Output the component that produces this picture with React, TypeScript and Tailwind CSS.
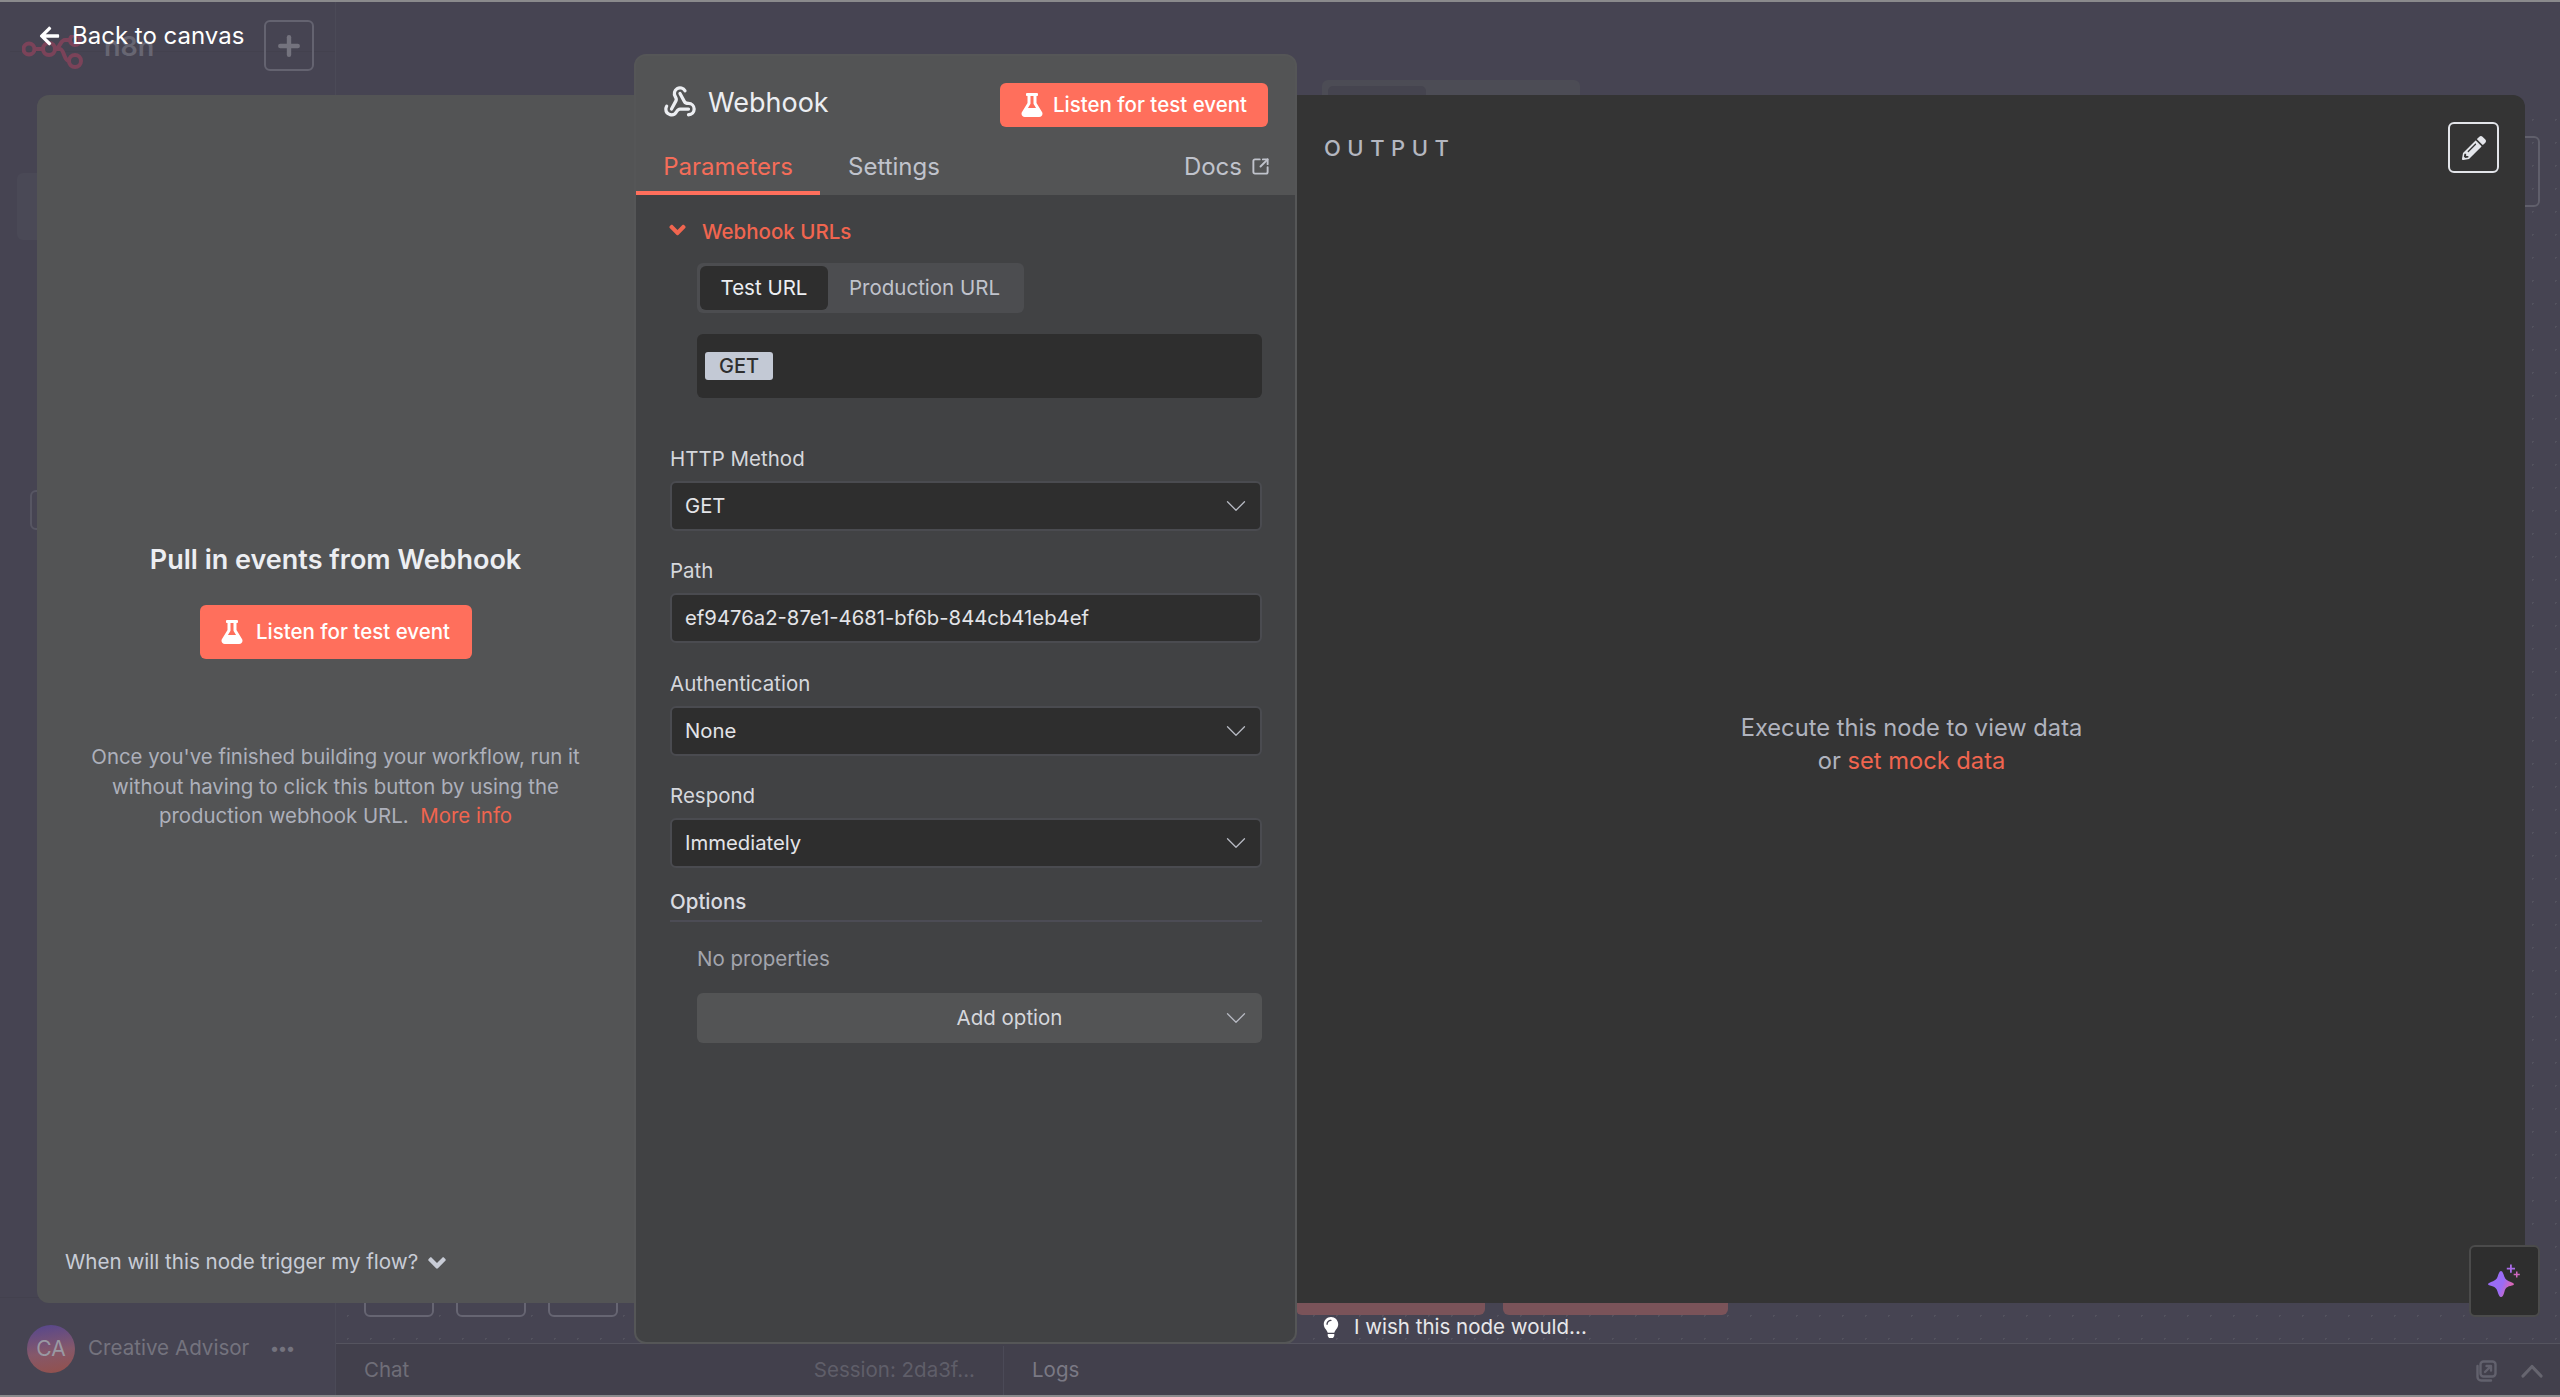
import { ChevronDown, Plus, SquareArrowOutUpRight, Webhook } from 'lucide-react';
import { FaAngleDown, FaArrowLeft, FaFlask, FaLightbulb, FaPencilAlt } from 'react-icons/fa';

function ListenButton({ className }: { className: string }) {
  return (
    <button className={`flex items-center justify-center rounded-[6px] bg-[#ff6f5c] font-medium text-white ${className}`}>
      <FaFlask className="h-[24px] w-[22px]" />
      <span className="text-[20.5px] leading-none">Listen for test event</span>
    </button>
  );
}

function Field({ label, value, select = true }: { label: string; value: string; select?: boolean }) {
  return (
    <div className="flex flex-col">
      <label className="flex h-[50px] items-end pb-[12px] text-[20.5px] leading-none text-[#d5d7dc]">{label}</label>
      <div className="flex h-[50px] items-center justify-between rounded-[6px] border-2 border-[#4a4b50] bg-[#2e2e2e] px-[13px] text-[20.3px] text-[#e3e4e8]">
        <span>{value}</span>
        {select && <ChevronDown className="-mr-[6px] h-[34px] w-[34px] text-[#b7bac3]" strokeWidth={0.9} />}
      </div>
    </div>
  );
}

function N8nLogo() {
  return (
    <svg width="62" height="34" viewBox="0 0 62 34" fill="none" stroke="#7b4359" strokeWidth="4">
      <circle cx="7" cy="14" r="5.5" />
      <circle cx="27" cy="14" r="6" />
      <circle cx="53" cy="26" r="6" />
      <circle cx="53" cy="5" r="5" />
      <path d="M12 14h9M33 14h5c4 0 4 12 9 12M33 14c5 0 5-9 10-9h5" />
    </svg>
  );
}

function Sparkle() {
  return (
    <svg width="34" height="34" viewBox="0 0 34 34">
      <defs>
        <linearGradient id="spark" x1="0" x2="1" y1="0.3" y2="0.7">
          <stop offset="0.55" stopColor="#9a6cf5" />
          <stop offset="0.85" stopColor="#d866b8" />
        </linearGradient>
      </defs>
      <path d="M13 7C14.500 7 15.500 10 16.500 13C17.500 15.500 19 16.500 24 18.500C26.500 19.500 26.500 21 24 21.500C19 22.500 17.500 24 16.500 27.500C15.500 31.500 14.500 33 13 33C11.500 33 10.500 31 9.500 27.500C8.500 24 7 22.800 2 21.500C-0.500 21 -0.500 19.500 2 18.500C7 16.500 8.500 15.500 9.500 13C10.500 10 11.500 7 13 7Z" fill="url(#spark)" />
      <path d="M22 0.500h1.800v3.200h3.200v1.800h-3.200v3.200h-1.800v-3.200h-3.200v-1.800h3.200Z" fill="#a96be8" />
      <path d="M28 7.500h1.500v2.300h2.300v1.500h-2.300v2.300h-1.500v-2.300h-2.300v-1.500h2.300Z" fill="#cf68c0" />
    </svg>
  );
}

function PopOut() {
  return (
    <svg width="21" height="22" viewBox="0 0 21 22" fill="none" stroke="#62616d" strokeWidth="2.4" strokeLinecap="round" strokeLinejoin="round">
      <rect x="4.500" y="1.500" width="15" height="15" rx="3" />
      <path d="M1.500 6v11a3.500 3.500 0 0 0 3.500 3.500h10" />
      <path d="M9 12l6-6M10.500 6H15v4.500" />
    </svg>
  );
}

export default function App() {
  return (
    <div className="relative flex h-[1397px] w-[2560px] overflow-hidden border-y-2 border-[#8a8a8c] bg-[#464452] font-['Inter',sans-serif]">
      {/* Dimmed app behind the modal */}
      <aside className="flex w-[336px] shrink-0 flex-col justify-between border-r border-[#4b4a57]">
        <div className="flex flex-col">
          <div className="ml-[10px] flex h-[50px] items-start justify-between border-b border-[#43414e] pl-[12px] pr-[21px] pt-[18px]">
            <div className="mt-[15px] flex items-center gap-[20px]">
              <N8nLogo />
              <span className="-mt-[12px] text-[27px] font-semibold leading-none text-[#676672]">n8n</span>
            </div>
            <div className="flex h-[51px] w-[50px] items-center justify-center rounded-[6px] border-2 border-[#646370] text-[#74737e]">
              <Plus className="h-[30px] w-[30px]" strokeWidth={3.5} />
            </div>
          </div>
          <div className="ml-[17px] mt-[121px] h-[67px] w-[60px] rounded-[6px] bg-[#4a4956]" />
          <div className="ml-[30px] mt-[250px] h-[40px] w-[30px] rounded-[6px] border-2 border-[#575663]" />
        </div>
        <div className="flex h-[98px] items-start gap-[13px] border-t border-[#43414e] pl-[27px] pt-[27px]">
          <div className="flex h-[48px] w-[48px] items-center justify-center rounded-full bg-[linear-gradient(170deg,#54468f,#85586a_55%,#94504a)] text-[21px] text-[#9a99a3]">CA</div>
          <span className="pt-[9px] text-[20.6px] leading-[28px] text-[#74737e]">Creative Advisor</span>
          <span className="ml-[8px] pt-[9px] text-[17px] font-bold leading-[28px] text-[#74737e]">•••</span>
        </div>
      </aside>

      <main className="relative flex min-w-0 flex-1 flex-col">
        <div className="flex h-[106px] items-end pl-[986px]">
          <div className="h-[28px] w-[258px] rounded-t-[6px] bg-[#4c4c55] pl-[6px] pt-[6px]">
            <div className="h-full w-[98px] rounded-t-[5px] bg-[#45444f]" />
          </div>
        </div>
        <div className="flex flex-1 items-end gap-[22px] bg-[radial-gradient(#53525e_1px,transparent_1px)] bg-[size:23px_23px] pb-[26px] pl-[28px]">
          <div className="h-[30px] w-[70px] rounded-[6px] border-2 border-[#666572]" />
          <div className="h-[30px] w-[70px] rounded-[6px] border-2 border-[#666572]" />
          <div className="h-[30px] w-[70px] rounded-[6px] border-2 border-[#666572]" />
        </div>
        <footer className="flex h-[52px] items-center border-t border-[#55545f] bg-[#42404c] pt-[2px] text-[20.5px] text-[#6f6e78]">
          <div className="flex h-full w-[668px] items-center justify-between border-r border-[#4b4a57] px-[28px]">
            <span>Chat</span>
            <span className="text-[#5f5e69]">Session: 2da3f...</span>
          </div>
          <span className="pl-[28px] text-[#7a7984]">Logs</span>
          <div className="ml-auto flex items-center gap-[24px] pr-[17px]">
            <PopOut />
            <svg width="22" height="14" viewBox="0 0 22 14" fill="none" stroke="#66656f" strokeWidth="3.2" strokeLinecap="round" strokeLinejoin="round">
              <path d="M2 12l9-9.500 9 9.500" />
            </svg>
          </div>
        </footer>
        <div className="absolute right-[20px] top-[134px] h-[71px] w-[40px] rounded-r-[6px] border-2 border-[#605f6b]" />
      </main>

      {/* Back link */}
      <button className="absolute left-[38px] top-[22px] flex items-center gap-[11px] text-[24px] leading-none text-white">
        <FaArrowLeft className="h-[22px] w-[23px]" />
        <span>Back to canvas</span>
      </button>

      {/* Node detail panels */}
      <div className="absolute inset-0 flex pb-[92px] pl-[37px] pr-[35px] pt-[93px]">
        <section className="flex w-[597px] shrink-0 flex-col items-center rounded-l-[12px] bg-[#535455] px-[40px] pb-[26px]">
          <div className="flex flex-1 flex-col items-center pt-[451px]">
            <h2 className="text-[27px] font-semibold leading-none text-[#eceef2]">Pull in events from Webhook</h2>
            <ListenButton className="mt-[32px] h-[54px] w-[272px] gap-[13px]" />
            <p className="mt-[83px] text-center text-[20.4px] leading-[29.500px] text-[#adb0bb]">
              Once you've finished building your workflow, run it without having to click this button by using the production webhook URL.
              {'  '}
              <span className="ml-[6px] text-[#f0654f]">More info</span>
            </p>
          </div>
          <div className="-ml-[24px] flex w-full translate-y-[1px] items-center gap-[5px] text-[20.6px] text-[#c8ccd6]">
            <span>When will this node trigger my flow?</span>
            <FaAngleDown className="h-[28px] w-[28px]" />
          </div>
        </section>

        <section className="relative z-10 -my-[41px] flex w-[663px] shrink-0 flex-col overflow-hidden rounded-[12px] border-2 border-[#555657] bg-[#535455]">
          <header className="flex h-[139px] flex-col">
            <div className="flex h-[71px] items-end justify-between px-[27px]">
              <div className="flex items-center gap-[11px] pb-[8px]">
                <Webhook className="h-[34px] w-[34px] text-[#eceef2]" strokeWidth={2.3} />
                <span className="text-[27px] leading-none text-[#eceef2]">Webhook</span>
              </div>
              <ListenButton className="h-[44px] w-[268px] gap-[10px]" />
            </div>
            <div className="flex flex-1 items-stretch pt-[15px] text-[24px]">
              <div className="flex w-[184px] items-center justify-center border-b-[4px] border-[#ff6f5c] text-[#f56d59]">Parameters</div>
              <div className="ml-[28px] flex items-center pb-[4px] text-[#c0c3cc]">Settings</div>
              <div className="ml-auto flex items-center gap-[9px] pb-[4px] pr-[25px] text-[#c0c3cc]">
                <span>Docs</span>
                <SquareArrowOutUpRight className="h-[19px] w-[19px]" strokeWidth={2.4} />
              </div>
            </div>
          </header>

          <div className="flex flex-1 flex-col bg-[#414244] pl-[34px] pr-[33px] pt-[22px]">
            <div className="-ml-[3px] flex h-[30px] items-center gap-[14px] text-[20.5px] font-medium text-[#f0654f]">
              <FaAngleDown className="-mt-[4px] h-[26px] w-[21px]" />
              <span>Webhook URLs</span>
            </div>
            <div className="ml-[27px] mt-[16px] flex h-[50px] w-[327px] items-center rounded-[6px] bg-[#4c4d50] px-[3px] text-[20.5px]">
              <div className="flex h-[44px] w-[128px] items-center justify-center rounded-[6px] bg-[#2e2e2e] text-[#eceef2]">Test URL</div>
              <div className="pl-[21px] text-[#c0c3cc]">Production URL</div>
            </div>
            <div className="ml-[27px] mt-[21px] flex h-[64px] items-center rounded-[6px] bg-[#2e2e2e] px-[8px]">
              <span className="flex h-[28px] w-[68px] items-center justify-center rounded-[3px] bg-[#c3c9d5] text-[20px] font-medium text-[#2e2e2e]">GET</span>
            </div>
            <div className="mt-[33px]">
              <Field label="HTTP Method" value="GET" />
            </div>
            <div className="pt-[12px]">
              <Field label="Path" value="ef9476a2-87e1-4681-bf6b-844cb41eb4ef" select={false} />
            </div>
            <div className="pt-[13px]">
              <Field label="Authentication" value="None" />
            </div>
            <div className="pt-[12px]">
              <Field label="Respond" value="Immediately" />
            </div>
            <div className="mt-[22px] flex h-[32px] items-start border-b-2 border-[#4c4c55] text-[20.5px] font-medium leading-[24px] text-[#d9dbe0]">Options</div>
            <div className="ml-[27px] mt-[24px] text-[20.5px] leading-[26px] text-[#a3a5ad]">No properties</div>
            <div className="relative ml-[27px] mt-[21px] flex h-[50px] items-center justify-center rounded-[6px] bg-[#535455] pl-[60px] text-[20.5px] text-[#d5d7dc]">
              <span>Add option</span>
              <ChevronDown className="absolute right-[9px] h-[34px] w-[34px] text-[#b7bac3]" strokeWidth={0.9} />
            </div>
          </div>
        </section>

        <section className="relative flex min-w-0 flex-1 flex-col rounded-r-[12px] bg-[#343434] pl-[27px] pr-[26px] pt-[27px]">
          <div className="flex items-start justify-between">
            <span className="pt-[12px] text-[22px] font-medium leading-[28px] tracking-[6.5px] text-[#b4b7c0]">OUTPUT</span>
            <button className="flex h-[51px] w-[51px] items-center justify-center rounded-[6px] border-2 border-[#e3e5ea] text-[#e3e5ea]">
              <FaPencilAlt className="h-[24px] w-[24px]" />
            </button>
          </div>
          <div className="flex flex-1 flex-col items-center pt-[538px] text-[23.7px] leading-[33px] text-[#b0b3be]">
            <span>Execute this node to view data</span>
            <span>or <span className="text-[#f0654f]">set mock data</span></span>
          </div>
        </section>
      </div>

      {/* Bits of the canvas that stay visible under the panels */}
      <div className="absolute bottom-[80px] left-[1296px] flex gap-[18px]">
        <div className="h-[12px] w-[189px] rounded-b-[6px] bg-[#7a5359]" />
        <div className="h-[12px] w-[225px] rounded-b-[6px] bg-[#7a5359]" />
      </div>
      <div className="absolute bottom-[57px] left-[1322px] flex items-center gap-[14px] text-[20.5px] leading-none text-[#e8e8ea]">
        <FaLightbulb className="h-[21px] w-[18px] text-white" />
        <span>I wish this node would...</span>
      </div>
      <button className="absolute bottom-[78px] right-[20px] flex h-[72px] w-[71px] items-center justify-center rounded-[6px] border-2 border-[#4b4b4b] bg-[#2e2e2e]">
        <Sparkle />
      </button>
    </div>
  );
}
